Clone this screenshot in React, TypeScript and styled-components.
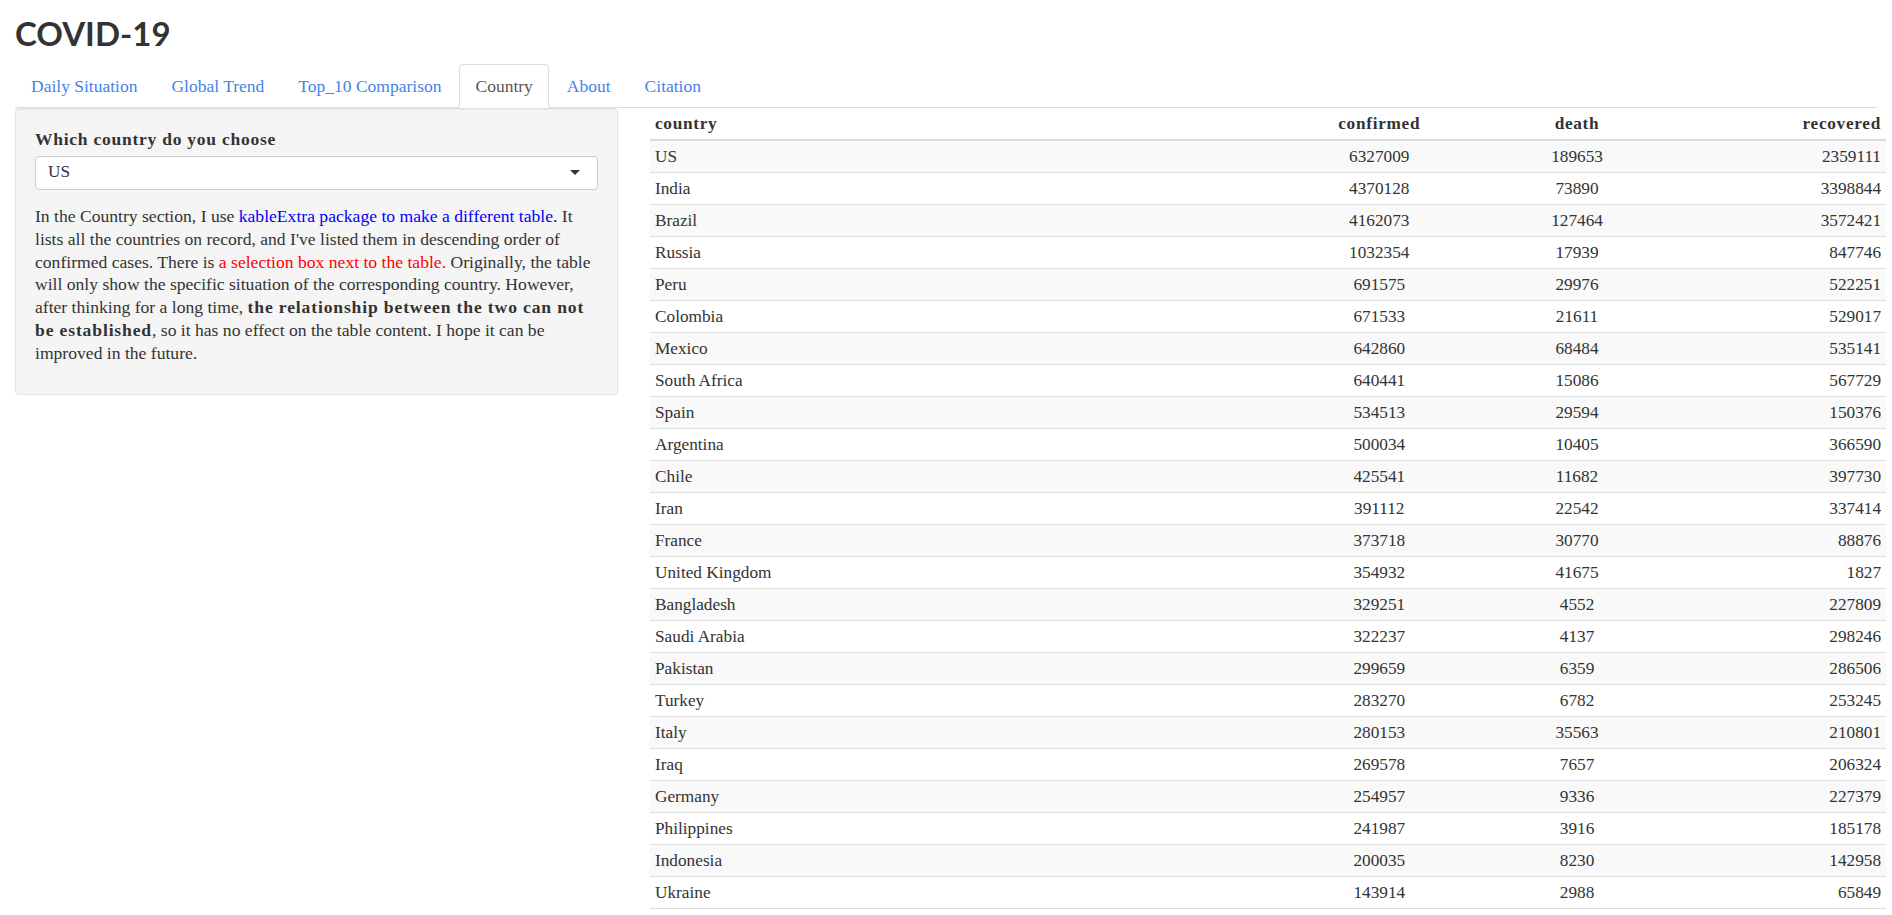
import React from "react";
import styled, { createGlobalStyle } from "styled-components";

const GlobalStyle = createGlobalStyle`
  body {
    margin: 0;
    background: #fff;
    color: #333;
    font-family: "Liberation Serif", "DejaVu Serif", serif;
    font-size: 17.5px;
    line-height: 22.85px;
  }
  * {
    box-sizing: border-box;
  }
`;

type Row = [string, number, number, number];

const rows: Row[] = [
  ["US", 6327009, 189653, 2359111],
  ["India", 4370128, 73890, 3398844],
  ["Brazil", 4162073, 127464, 3572421],
  ["Russia", 1032354, 17939, 847746],
  ["Peru", 691575, 29976, 522251],
  ["Colombia", 671533, 21611, 529017],
  ["Mexico", 642860, 68484, 535141],
  ["South Africa", 640441, 15086, 567729],
  ["Spain", 534513, 29594, 150376],
  ["Argentina", 500034, 10405, 366590],
  ["Chile", 425541, 11682, 397730],
  ["Iran", 391112, 22542, 337414],
  ["France", 373718, 30770, 88876],
  ["United Kingdom", 354932, 41675, 1827],
  ["Bangladesh", 329251, 4552, 227809],
  ["Saudi Arabia", 322237, 4137, 298246],
  ["Pakistan", 299659, 6359, 286506],
  ["Turkey", 283270, 6782, 253245],
  ["Italy", 280153, 35563, 210801],
  ["Iraq", 269578, 7657, 206324],
  ["Germany", 254957, 9336, 227379],
  ["Philippines", 241987, 3916, 185178],
  ["Indonesia", 200035, 8230, 142958],
  ["Ukraine", 143914, 2988, 65849],
];

const tabs = ["Daily Situation", "Global Trend", "Top_10 Comparison", "Country", "About", "Citation"];

type Align = "left" | "center" | "right";

const columns: { key: string; align: Align; width: string }[] = [
  { key: "country", align: "left", width: "51%" },
  { key: "confirmed", align: "center", width: "16%" },
  { key: "death", align: "center", width: "16%" },
  { key: "recovered", align: "right", width: "17%" },
];

const App = () => {
  return (
    <>
      <GlobalStyle />
      <Page>
        <Title>COVID-19</Title>
        <TabBar>
          {tabs.map((t) => (
            <TabItem key={t}>
              <TabLink $active={t === "Country"}>{t}</TabLink>
            </TabItem>
          ))}
        </TabBar>
        <Layout>
          <Sidebar>
            <Well>
              <FormGroup>
                <Label>Which country do you choose</Label>
                <SelectBox>
                  <span>US</span>
                  <Caret />
                </SelectBox>
              </FormGroup>
              <Text>
                In the Country section, I use{" "}
                <Blue>kableExtra package to make a different table.</Blue> It lists all the
                countries on record, and I've listed them in descending order of confirmed
                cases. There is <Red>a selection box next to the table.</Red> Originally, the
                table will only show the specific situation of the corresponding country.
                However, after thinking for a long time,{" "}
                <Strong>the relationship between the two can not be established</Strong>, so it
                has no effect on the table content. I hope it can be improved in the future.
              </Text>
            </Well>
          </Sidebar>
          <Main>
            <Table>
              <thead>
                <tr>
                  {columns.map((c) => (
                    <Th key={c.key} $align={c.align} $width={c.width}>
                      {c.key}
                    </Th>
                  ))}
                </tr>
              </thead>
              <tbody>
                {rows.map((r) => (
                  <Tr key={r[0]}>
                    {r.map((v, i) => (
                      <Td key={i} $align={columns[i].align}>
                        {v}
                      </Td>
                    ))}
                  </Tr>
                ))}
              </tbody>
            </Table>
          </Main>
        </Layout>
      </Page>
    </>
  );
};

const Page = styled.div`
  padding: 0 15px;
`;

const Title = styled.h2`
  margin: 16px 0 13px;
  font-family: Lato, "Open Sans", sans-serif;
  font-weight: 700;
  font-size: 33px;
  line-height: 35px;
  color: #333;
`;

const TabBar = styled.ul`
  display: flex;
  margin: 0;
  padding: 0;
  list-style: none;
  border-bottom: 1px solid #ddd;
`;

const TabItem = styled.li`
  margin-bottom: -1px;
`;

const TabLink = styled.a<{ $active?: boolean }>`
  display: block;
  margin-right: 2px;
  padding: 10px 15px;
  line-height: 22px;
  border: 1px solid ${(p) => (p.$active ? "#ddd" : "transparent")};
  border-bottom-color: ${(p) => (p.$active ? "#fff" : "transparent")};
  border-radius: 4px 4px 0 0;
  background: ${(p) => (p.$active ? "#fff" : "transparent")};
  color: ${(p) => (p.$active ? "#555" : "#4582ec")};
  cursor: pointer;
`;

const Layout = styled.div`
  display: flex;
  margin: 0 -15px;
`;

const Sidebar = styled.div`
  flex: 0 0 633px;
  padding: 0 15px;
`;

const Main = styled.div`
  flex: 1;
  padding: 0 6px 0 17px;
`;

const Well = styled.div`
  background: #f5f5f5;
  border: 1px solid #e3e3e3;
  border-radius: 4px;
  padding: 19px;
  box-shadow: inset 0 1px 1px rgba(0, 0, 0, 0.05);
`;

const FormGroup = styled.div`
  margin-bottom: 15px;
`;

const Label = styled.label`
  display: block;
  margin-bottom: 5px;
  font-weight: 700;
  letter-spacing: 0.75px;
`;

const SelectBox = styled.div`
  display: flex;
  align-items: center;
  justify-content: space-between;
  height: 34px;
  padding: 0 12px;
  background: #fff;
  border: 1px solid #ccc;
  border-radius: 4px;
  color: #333;
  font-size: 17.25px;
`;

const Caret = styled.span`
  width: 0;
  height: 0;
  margin-right: 5px;
  border-style: solid;
  border-width: 5px 5px 0 5px;
  border-color: #333 transparent transparent transparent;
`;

const Text = styled.p`
  margin: 0 0 10px;
  font-size: 17.6px;
`;

const Blue = styled.span`
  color: #0000ff;
`;

const Red = styled.span`
  color: #ff0000;
`;

const Strong = styled.b`
  font-weight: 700;
  letter-spacing: 0.85px;
`;

const Table = styled.table`
  width: 100%;
  border-collapse: collapse;
  font-size: 17.25px;
`;

const Th = styled.th<{ $align: Align; $width: string }>`
  width: ${(p) => p.$width};
  text-align: ${(p) => p.$align};
  padding: 4px 5px;
  line-height: 23px;
  font-weight: 700;
  letter-spacing: 0.7px;
  border-bottom: 2px solid #ddd;
`;

const Tr = styled.tr`
  &:nth-child(odd) {
    background: #f9f9f9;
  }
`;

const Td = styled.td<{ $align: Align }>`
  text-align: ${(p) => p.$align};
  padding: 4px 5px;
  line-height: 23px;
  border-bottom: 1px solid #ddd;
`;

export default App;
